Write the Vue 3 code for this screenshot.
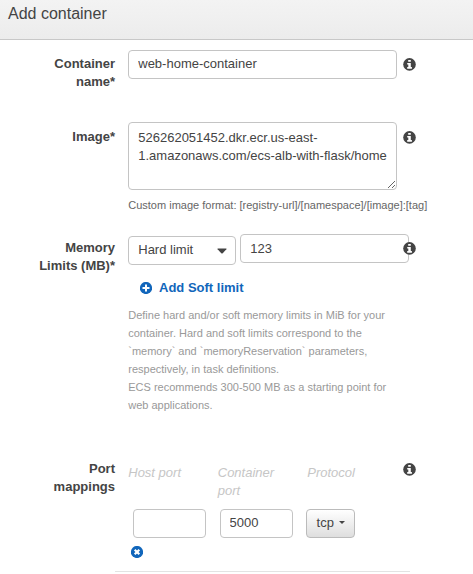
<script setup>
import { ref, h } from 'vue'

const name = ref('web-home-container')
const image = ref('526262051452.dkr.ecr.us-east-1.amazonaws.com/ecs-alb-with-flask/home')
const memory = ref('123')
const hostPort = ref('')
const containerPort = ref('5000')

const InfoIcon = () =>
  h('svg', { width: 13, height: 13, viewBox: '0 0 13 13' }, [
    h('circle', { cx: 6.5, cy: 6.4, r: 6.3, fill: '#444' }),
    h('path', { d: 'M5.2 2h2.6v1.8H5.2zM4.2 4.9h3.6v4.2h1.1v1.6H4.2V9.1h1.1V6.4H4.2z', fill: '#fff' }),
  ])
</script>

<template>
  <div class="dialog">
    <header class="header">Add container</header>

    <form class="form" @submit.prevent>
      <div class="row row-name">
        <label class="label">Container<br />name*</label>
        <div class="field"><input v-model="name" class="input" type="text" /></div>
        <span class="info"><InfoIcon /></span>
      </div>

      <div class="row row-image">
        <label class="label">Image*</label>
        <div class="field">
          <textarea v-model="image" class="input area" spellcheck="false"></textarea>
          <div class="format">Custom image format: [registry-url]/[namespace]/[image]:[tag]</div>
        </div>
        <span class="info"><InfoIcon /></span>
      </div>

      <div class="row row-memory">
        <label class="label">Memory<br />Limits (MB)*</label>
        <div class="field">
          <div class="limits">
            <div class="input select">
              <span>Hard limit</span>
              <svg width="10" height="6" viewBox="0 0 10 6">
                <path d="M1 .5h8q1 0 .4.8L5.7 5.2q-.7.6-1.4 0L.6 1.3Q0 .5 1 .5z" fill="#444" />
              </svg>
            </div>
            <input v-model="memory" class="input amount" type="text" />
          </div>
          <a class="add">
            <svg width="12" height="12" viewBox="0 0 12 12">
              <circle cx="6" cy="6" r="6.1" class="blue" />
              <path d="M6 2.5v7M2.5 6h7" stroke="#fff" stroke-width="2" />
            </svg>
            <span>Add Soft limit</span>
          </a>
          <p class="help">
            Define hard and/or soft memory limits in MiB for your container. Hard and soft limits
            correspond to the `memory` and `memoryReservation` parameters, respectively, in task
            definitions.<br />ECS recommends 300-500 MB as a starting point for web applications.
          </p>
        </div>
        <span class="info"><InfoIcon /></span>
      </div>

      <div class="row row-ports">
        <label class="label">Port<br />mappings</label>
        <div class="field">
          <div class="heads">
            <span>Host port</span>
            <span>Container<br />port</span>
            <span>Protocol</span>
          </div>
          <div class="ports">
            <input v-model="hostPort" class="input port" type="text" />
            <input v-model="containerPort" class="input port" type="text" />
            <button class="protocol" type="button">tcp<i class="caret"></i></button>
          </div>
          <svg class="remove" width="12" height="12" viewBox="0 0 12 12">
            <circle cx="6" cy="6" r="6.1" class="blue" />
            <path d="M3.7 3.7l4.6 4.6M8.3 3.7L3.7 8.3" stroke="#fff" stroke-width="2.2" />
          </svg>
        </div>
        <span class="info"><InfoIcon /></span>
      </div>
      <div class="divider"></div>
    </form>
  </div>
</template>

<style>
body {
  margin: 0;
  background: #fff;
}
</style>

<style scoped>
.dialog {
  height: 574px;
  overflow: hidden;
  font: 13px/18px "Liberation Sans", Arial, sans-serif;
  color: #444;
}
.header {
  box-sizing: border-box;
  height: 40px;
  padding: 5px 8px 4px;
  font-size: 16px;
  background: linear-gradient(#f3f3f3, #ececec);
  border-bottom: 1px solid #c8c8c8;
}
.form {
  padding-top: 10px;
}
.row {
  display: grid;
  grid-template-columns: 115px 13.25px 269px 5.75px 13px;
  align-items: start;
}
.label {
  grid-column: 1;
  padding-top: 5px;
  font-weight: bold;
  text-align: right;
}
.field {
  grid-column: 3;
}
.info {
  grid-column: 5;
  z-index: 1;
  height: 13px;
  padding-top: 8px;
}
.info svg {
  display: block;
}
.row-name {
  height: 72px;
}
.row-image {
  height: 111px;
}
.row-memory {
  height: 221px;
}
.row-ports {
  height: 117px;
}
.row-image .label,
.row-memory .label,
.row-ports .label {
  padding-top: 6px;
}
.row-image .info,
.row-memory .info,
.row-ports .info {
  padding-top: 9px;
}
.input {
  display: block;
  box-sizing: border-box;
  width: 100%;
  height: 29px;
  margin: 0;
  padding: 0 9px 2px;
  font: inherit;
  color: #444;
  background: #fff;
  border: 1px solid #c4c4c4;
  border-radius: 4px;
  outline: none;
}
.area {
  height: 68px;
  padding: 6px 9px;
  overflow: hidden;
  resize: both;
}
.format {
  margin-top: 6px;
  font-size: 11px;
  color: #666;
  white-space: nowrap;
}
.limits {
  display: flex;
  align-items: flex-start;
  gap: 4px;
  width: 281px;
  padding-top: 1px;
}
.select {
  display: flex;
  align-items: center;
  justify-content: space-between;
  flex: none;
  width: 108px;
  margin-top: 2px;
  padding-right: 8px;
}
.select svg {
  margin-top: 3px;
}
.amount {
  flex: 1;
  min-width: 0;
  padding-bottom: 0;
}
.add {
  display: flex;
  align-items: center;
  gap: 7px;
  margin: 14px 0 0 11.75px;
  font-weight: bold;
  color: #1166bb;
}
.add svg {
  margin-top: -1px;
}
.blue {
  fill: #1166bb;
}
.help {
  margin: 9px 0 0;
  font-size: 11px;
  color: #999;
}
.heads {
  display: grid;
  grid-template-columns: 89.5px 89.5px 90px;
  padding-top: 10px;
  font-style: italic;
  color: #c6c6c6;
}
.ports {
  display: flex;
  margin: 9px 0 0 4.75px;
}
.port {
  width: 73px;
  margin-right: 13.6px;
}
.port + .port {
  margin-right: 13px;
}
.protocol {
  display: flex;
  box-sizing: border-box;
  align-items: center;
  gap: 5px;
  width: 49px;
  height: 29px;
  padding: 0 9px 2px 10px;
  font: inherit;
  color: #444;
  background: linear-gradient(#fff, #dedede);
  border: 1px solid #bbb;
  border-radius: 4px;
}
.caret {
  border: 3px solid transparent;
  border-top-color: #444;
  border-bottom: 0;
}
.remove {
  display: block;
  margin: 8px 0 0 2.75px;
}
.divider {
  width: 295px;
  margin-left: 115px;
  border-top: 1px solid #e3e3e3;
}
</style>
